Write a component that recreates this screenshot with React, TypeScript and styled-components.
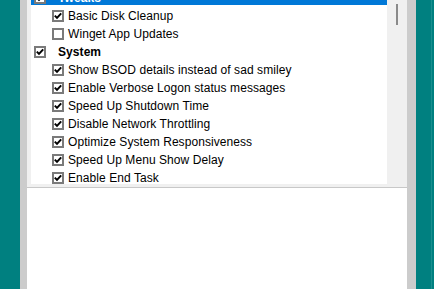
import React, { useEffect, useRef } from 'react'
import styled, { createGlobalStyle } from 'styled-components'

const GlobalStyle = createGlobalStyle`
  html, body {
    margin: 0;
    padding: 0;
    background: #008080;
  }
  body {
    font-family: "Liberation Sans", Arial, sans-serif;
    font-size: 12px;
  }
`

const Desktop = styled.div`
  width: 434px;
  height: 289px;
  display: flex;
  background: #008080;
  padding: 0 18px 0 20px;
  box-sizing: border-box;
  overflow: hidden;
  position: relative;
`

const WindowFrame = styled.div`
  flex: 1;
  display: flex;
  background: #cccccc;
  padding: 0 9px 0 7px;
`

const Client = styled.div`
  flex: 1;
  display: flex;
  flex-direction: column;
  background: #ffffff;
`

const TreePanel = styled.div`
  height: 188px;
  display: flex;
  background: #f0f0f0;
  padding-left: 4px;
  border-bottom: 1px solid #c8c8c8;
  box-sizing: border-box;
`

const ListBox = styled.div`
  width: 356px;
  height: 184px;
  background: #ffffff;
  overflow: hidden;
`

const ScrollTrack = styled.div`
  flex: 1;
  display: flex;
  justify-content: center;
  padding-top: 4px;
  padding-right: 1px;
`

const ScrollThumb = styled.div`
  width: 2px;
  height: 21px;
  background: #8a8a8a;
`

const Row = styled.div<{ $group?: boolean; $selected?: boolean }>`
  height: 18px;
  box-sizing: border-box;
  padding-top: 3px;
  display: flex;
  align-items: center;
  padding-left: ${({ $group }) => ($group ? '3px' : '21px')};
  gap: ${({ $group }) => ($group ? '12px' : '4px')};
  background: ${({ $selected }) => ($selected ? '#0078d7' : 'transparent')};
  color: ${({ $selected }) => ($selected ? '#ffffff' : '#000000')};
  font-weight: ${({ $group }) => ($group ? 'bold' : 'normal')};
  letter-spacing: 0.07px;
  white-space: nowrap;
`

const Box = styled.span`
  width: 12px;
  height: 12px;
  box-sizing: border-box;
  border: 2px solid #7a7a7a;
  background: #ffffff;
  display: flex;
  align-items: center;
  justify-content: center;
  flex: none;

  svg {
    display: block;
  }
`

const Label = styled.span`
  line-height: 14px;
`

const BottomArea = styled.div`
  flex: 1;
  background: #ffffff;
`

const EdgeLine = styled.div`
  position: absolute;
  top: 0;
  bottom: 0;
  right: 2px;
  width: 1px;
  background: #1a9090;
`

const CheckBox: React.FC<{ checked?: boolean }> = ({ checked }) => (
  <Box>
    {checked && (
      <svg width="8" height="8" viewBox="0 0 8 8">
        <path d="M0.8 3.6 L3 5.9 L7.2 1.4" fill="none" stroke="#000" strokeWidth="2" />
      </svg>
    )}
  </Box>
)

type Item = { label: string; checked: boolean; group?: boolean; selected?: boolean }

const items: Item[] = [
  { label: 'Tweaks', checked: true, group: true, selected: true },
  { label: 'Basic Disk Cleanup', checked: true },
  { label: 'Winget App Updates', checked: false },
  { label: 'System', checked: true, group: true },
  { label: 'Show BSOD details instead of sad smiley', checked: true },
  { label: 'Enable Verbose Logon status messages', checked: true },
  { label: 'Speed Up Shutdown Time', checked: true },
  { label: 'Disable Network Throttling', checked: true },
  { label: 'Optimize System Responsiveness', checked: true },
  { label: 'Speed Up Menu Show Delay', checked: true },
  { label: 'Enable End Task', checked: true },
]

export default function App() {
  const listRef = useRef<HTMLDivElement>(null)

  useEffect(() => {
    // list is scrolled a bit past the first group header
    if (listRef.current) listRef.current.scrollTop = 13
  }, [])

  return (
    <>
      <GlobalStyle />
      <Desktop>
        <WindowFrame>
          <Client>
            <TreePanel>
              <ListBox ref={listRef}>
                {items.map((it) => (
                  <Row key={it.label} $group={it.group} $selected={it.selected}>
                    <CheckBox checked={it.checked} />
                    <Label>{it.label}</Label>
                  </Row>
                ))}
              </ListBox>
              <ScrollTrack>
                <ScrollThumb />
              </ScrollTrack>
            </TreePanel>
            <BottomArea />
          </Client>
        </WindowFrame>
        <EdgeLine />
      </Desktop>
    </>
  )
}
